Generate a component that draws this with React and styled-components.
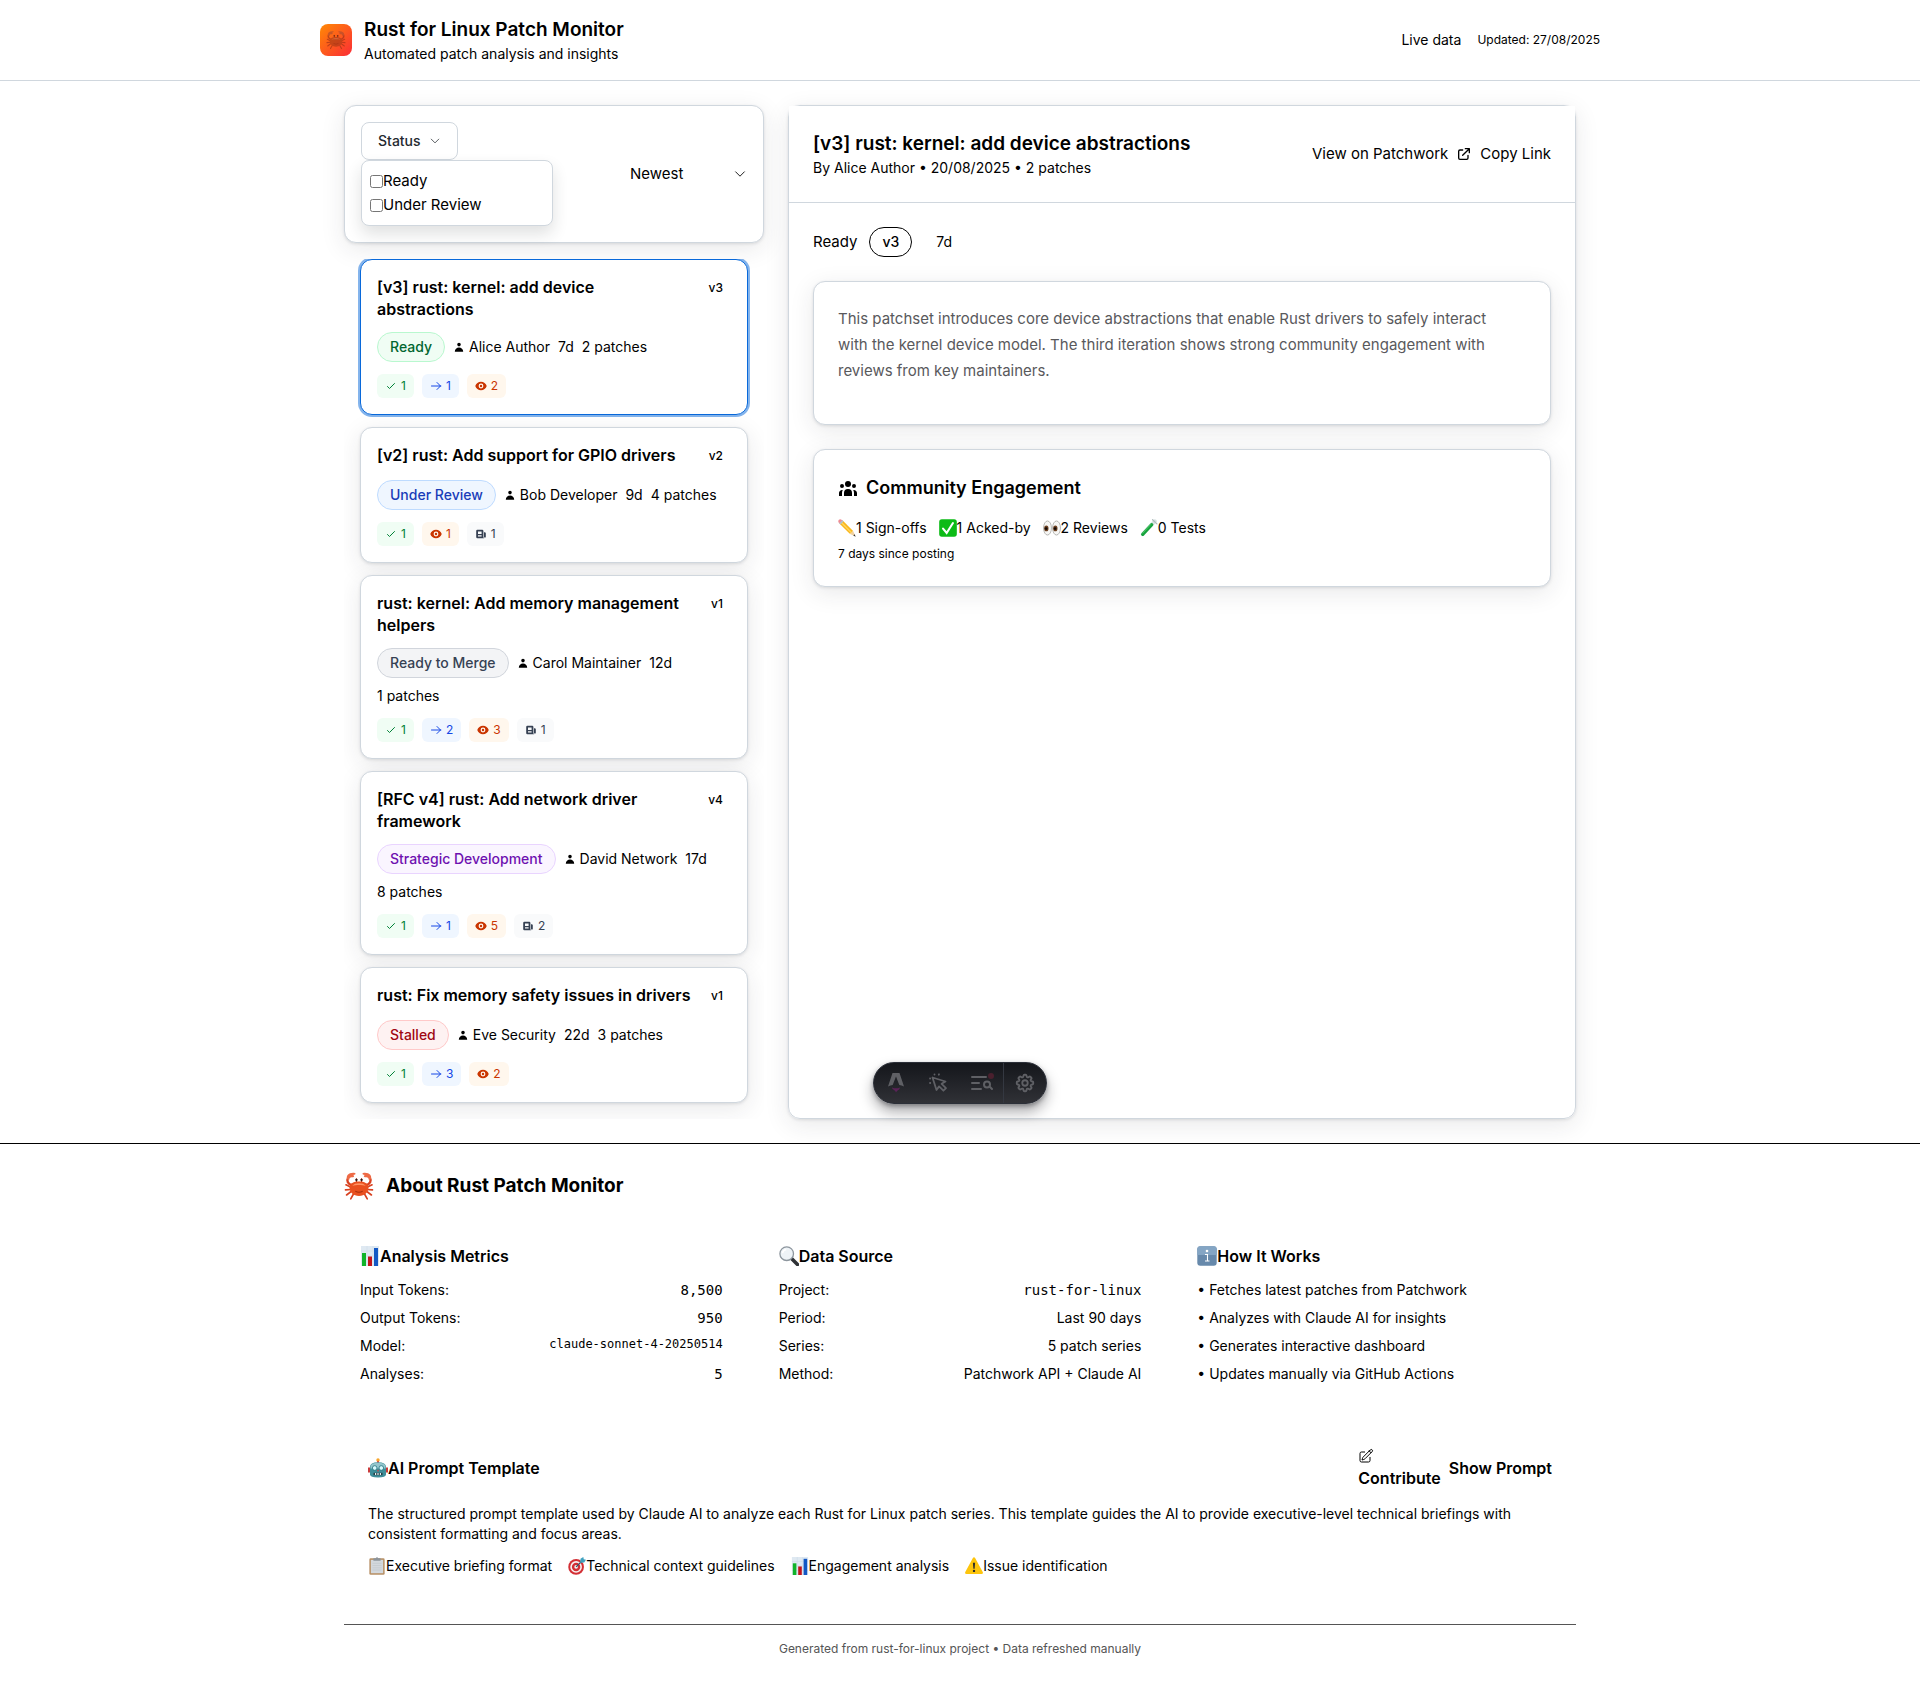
import React from "react";
import styled, { createGlobalStyle, css } from "styled-components";
import { HiUser, HiUserGroup, HiEye, HiNewspaper, HiOutlineCheck, HiOutlineArrowRight, HiOutlineExternalLink } from "react-icons/hi";
import { HiOutlinePencilSquare, HiOutlineChevronDown, HiOutlineCog8Tooth } from "react-icons/hi2";

const line = "#d0d7de";
const mono = '"DejaVu Sans Mono", "Liberation Mono", monospace';
const softShadow = "0 1px 3px rgba(37, 41, 46, 0.12), 0 6px 24px rgba(37, 41, 46, 0.1)";

const GlobalStyle = createGlobalStyle`
  *, *::before, *::after { box-sizing: border-box; }
  body {
    margin: 0;
    background: #fff;
    color: #000;
    font: 400 15px/24px Inter, "Noto Sans", sans-serif;
  }
  h1, h2, h3, p, ul, dl, dd { margin: 0; padding: 0; }
  a { color: inherit; text-decoration: none; }
  button, select, input { font: inherit; color: inherit; }
  svg { flex: none; display: block; }
`;

const small = css`
  font-size: 14px;
  line-height: 20px;
`;
const tiny = css`
  font-size: 12px;
  line-height: 16px;
`;

/* ---------- pictograms ---------- */

const drawings = {
  crab: (
    <>
      <g fill="none" stroke="#d8401f" strokeWidth="1.1" strokeLinecap="round">
        <path d="M5 11 1.3 9.2M4.600 12.300 1 12.600M5 13.500 1.700 16M6.500 15 4.500 18.600 M15 11l3.700-1.800M15.400 12.300l3.600.3M15 13.500l3.300 2.500M13.500 15l2 3.600" />
        <path d="M5.500 9.500C2.500 8.800 1.600 6.500 2.700 4.500M14.500 9.500c3-.7 3.900-3 2.800-5" strokeWidth="1.600" />
      </g>
      <path d="M2.200 5.600C1 3 3.300.7 7.300 1.300 8.200 1.700 7.600 2.600 6 2.700 7.300 3.300 6.700 4.300 5.600 4.200 4.300 4 3.500 4.600 3.500 5.800ZM17.800 5.600C19 3 16.700.7 12.700 1.300c-.9.4-.3 1.300 1.300 1.400-1.300.6-.7 1.600.4 1.500 1.300-.2 2.100.4 2.100 1.600Z" fill="#ee6a45" />
      <path d="M3.700 11C3.700 8.300 6.500 7 10 7s6.300 1.300 6.300 4c0 3-2.600 5.700-6.300 5.700S3.700 14 3.700 11Z" fill="#e9501f" />
      <path d="M5.500 9.800C6.500 8.600 8 8.100 10 8.100s3.500.5 4.500 1.700c-2.500-.6-6.500-.6-9 0Z" fill="#ff9464" />
      <path d="M8.300 4.900v2.500M11.700 4.900v2.500" stroke="#b53316" strokeWidth=".7" />
      <circle cx="8.300" cy="5.900" r=".8" fill="#2b1512" />
      <circle cx="11.700" cy="5.900" r=".8" fill="#2b1512" />
      <path d="M7.500 13.400q2.500 1.600 5 0" fill="none" stroke="#a8300f" strokeWidth=".7" />
    </>
  ),
  chart: (
    <>
      <path d="M1 0h18v20H1z" fill="#dfe9f2" />
      <path d="M1 5h18M1 10h18M1 15h18M7 0v20M13 0v20" stroke="#c9d8e6" strokeWidth=".5" />
      <path d="M2 7h4v13H2z" fill="#10b32a" />
      <path d="M8 10.500h4V20H8z" fill="#c3141b" />
      <path d="M14 2h4v18h-4z" fill="#1358c4" />
    </>
  ),
  lens: (
    <>
      <path d="m12.500 12.500 6 6" stroke="#2f3236" strokeWidth="3.600" strokeLinecap="round" />
      <circle cx="7.700" cy="7.700" r="6.800" fill="#eef3f7" stroke="#8d969e" strokeWidth="1.300" />
      <path d="M3.500 7.200a4.300 4.300 0 0 1 3.700-3.800" fill="none" stroke="#fff" strokeWidth="1.500" />
    </>
  ),
  info: (
    <>
      <rect x=".3" y=".3" width="19.400" height="19.400" rx="3" fill="#6789ab" />
      <path d="M.3 3.300a3 3 0 0 1 3-3h13.400a3 3 0 0 1 3 3V9H.3z" fill="#84a5c4" />
      <circle cx="10" cy="5" r="1.300" fill="#fff" />
      <path d="M8 8.500h2.500V15h1.500M8 15h4.500" fill="none" stroke="#fff" strokeWidth="1.100" />
    </>
  ),
  robot: (
    <>
      <circle cx="10" cy="2" r="1.700" fill="#f7a52a" />
      <path d="M9.200 3h1.600v3H9.200z" fill="#d93a3a" />
      <path d="M0 9.500h3v5H0zM17 9.500h3v5h-3z" fill="#c93b3b" />
      <path d="M2 9Q2 4.300 10 4.300T18 9v7.500q0 3-8 3t-8-3Z" fill="#3e8e99" />
      <path d="M2.500 9q0-4.200 7.500-4.200T17.500 9v1.500h-15Z" fill="#93c5cc" />
      <circle cx="6.700" cy="10" r="2.300" fill="#d8fbff" stroke="#24727e" strokeWidth=".8" />
      <circle cx="13.300" cy="10" r="2.300" fill="#d8fbff" stroke="#24727e" strokeWidth=".8" />
      <path d="m10 11.300 1 2H9z" fill="#d93a3a" />
      <path d="M5.500 14.800h9v2.400h-9z" fill="#263c42" />
      <path d="M7 15h1.200v2H7zM9.400 15h1.200v2H9.400zM11.800 15H13v2h-1.200z" fill="#e8eff0" />
    </>
  ),
  pencil: (
    <>
      <path d="M5.200 1.800 16.800 13.400l-3.400 3.400L1.800 5.200z" fill="#f9b61b" />
      <path d="M4 3 15.600 14.600l-1.100 1.100L2.900 4.100z" fill="#ffd55e" />
      <path d="M.7 3.900Q-.2 2 1 .9T3.900.7L5.200 1.800 1.800 5.200Z" fill="#f08b93" />
      <path d="m4.600 1.200 1.500 1.500-3.400 3.400L1.200 4.600z" fill="#b8bfc6" />
      <path d="m16.800 13.400 2.700 6.100-6.100-2.700z" fill="#f1d1a0" />
      <path d="m18.400 17 1.200 2.600L17 18.400z" fill="#333" />
    </>
  ),
  check: (
    <>
      <rect x=".2" y=".2" width="19.600" height="19.600" rx="3" fill="#0cbb16" />
      <path d="M4.500 10.700 8.500 15.500 15.500 4.500" fill="none" stroke="#fff" strokeWidth="2.300" strokeLinecap="round" />
    </>
  ),
  eyes: (
    <>
      <ellipse cx="5" cy="10" rx="4.400" ry="7.800" fill="#f7f7f5" stroke="#a9a9a6" strokeWidth=".9" />
      <ellipse cx="15" cy="10" rx="4.400" ry="7.800" fill="#f7f7f5" stroke="#a9a9a6" strokeWidth=".9" />
      <ellipse cx="3.700" cy="10.500" rx="2.400" ry="3.200" fill="#6b3f1f" />
      <ellipse cx="13.700" cy="10.500" rx="2.400" ry="3.200" fill="#6b3f1f" />
      <circle cx="3.500" cy="10.600" r="1.500" fill="#140c08" />
      <circle cx="13.500" cy="10.600" r="1.500" fill="#140c08" />
    </>
  ),
  tube: (
    <>
      <path d="M16.500 2.500 3 17" stroke="#d7e2e2" strokeWidth="4.200" strokeLinecap="round" />
      <path d="M13 6.300 3 17" stroke="#16a33c" strokeWidth="3.600" strokeLinecap="round" />
      <path d="M12 6 2.700 16" stroke="#63d67c" strokeWidth=".9" />
      <path d="m14 .8 4.800 4.600" stroke="#aebbbb" strokeWidth="1.400" strokeLinecap="round" />
    </>
  ),
  clipboard: (
    <>
      <rect x="1.500" y="1.500" width="17" height="18.200" rx="1.500" fill="#b89167" />
      <path d="M3.200 3.200h13.600V18H3.200z" fill="#d3d8dd" />
      <path d="M5 7h10M5 9.500h10M5 12h10M5 14.500h10" stroke="#bcc2c8" strokeWidth=".6" />
      <path d="M6 1.500h2.500Q10-1 11.500 1.500H14v2.700H6z" fill="#8c949b" />
    </>
  ),
  target: (
    <>
      <circle cx="9" cy="11" r="8.700" fill="#d32f35" />
      <circle cx="9" cy="11" r="6.500" fill="#f7f1f1" />
      <circle cx="9" cy="11" r="4.700" fill="#d32f35" />
      <circle cx="9" cy="11" r="2" fill="#f7f1f1" />
      <path d="m9 11 7-7" stroke="#33566b" strokeWidth="1.400" />
      <path d="m13.500 6.500.4-4.500L17 0l.5 2.500 2.500.5-2 3z" fill="#3fa1bf" />
    </>
  ),
  warning: (
    <>
      <path d="M8.600 1.300q1.400-1.900 2.800 0l8.300 15.400q.8 2.300-1.400 2.300H1.700Q-.5 19 .3 16.700Z" fill="#fdc50d" />
      <path d="M8.800 6.500h2.400l-.5 6.500H9.300z" fill="#2b2b2b" />
      <circle cx="10" cy="15.500" r="1.300" fill="#2b2b2b" />
    </>
  ),
};

const Emoji = ({ name, size = 20 }) => (
  <svg width={size} height={size} viewBox="0 0 20 20" aria-hidden="true">
    {drawings[name]}
  </svg>
);

/* ---------- header ---------- */

const TopBar = styled.header`
  border-bottom: 1px solid ${line};
`;
const TopBarInner = styled.div`
  max-width: 1280px;
  margin: 0 auto;
  padding: 16px 0;
  display: flex;
  align-items: center;
  justify-content: space-between;
`;
const Brand = styled.div`
  display: flex;
  align-items: center;
  gap: 12px;
`;
const Logo = styled.div`
  width: 32px;
  height: 32px;
  border-radius: 8px;
  background: linear-gradient(135deg, #ff8904, #fb2c36);
  display: grid;
  place-items: center;
  svg {
    opacity: 0.6;
    filter: brightness(0.7);
  }
`;
const Heading = styled.h1`
  font-size: 19px;
  line-height: 28px;
  font-weight: 600;
`;
const Sub = styled.p`
  ${small}
`;
const Tiny = styled.p`
  ${tiny}
`;
const Freshness = styled.div`
  display: flex;
  align-items: center;
  gap: 16px;
`;

/* ---------- layout ---------- */

const Main = styled.main`
  position: relative;
  max-width: 1280px;
  margin: 0 auto;
  padding: 24px;
  display: grid;
  grid-template-columns: 420px minmax(0, 1fr);
  gap: 24px;
`;
const Sidebar = styled.div`
  display: flex;
  flex-direction: column;
  gap: 16px;
`;
const Card = styled.section`
  border: 1px solid ${line};
  border-radius: 12px;
  background: #fff;
  box-shadow: ${softShadow};
  padding: ${(p) => p.$pad || 16}px;
`;

/* ---------- filters ---------- */

const FilterCard = styled(Card)`
  display: flex;
  align-items: center;
  justify-content: space-between;
`;
const StatusButton = styled.button`
  ${small}
  display: flex;
  align-items: center;
  gap: 8px;
  padding: 8px 16px;
  border: 1px solid ${line};
  border-radius: 8px;
  background: #fff;
  color: #24292f;
  font-weight: 500;
`;
const StatusMenu = styled.div`
  width: 192px;
  padding: 8px;
  border: 1px solid ${line};
  border-radius: 8px;
  background: #fff;
  box-shadow: 0 8px 16px rgba(37, 41, 46, 0.14);
`;
const Option = styled.label`
  display: flex;
  align-items: center;
  input {
    width: 13px;
    height: 13px;
    margin: 0;
  }
`;
const SortBox = styled.div`
  position: relative;
  width: 117px;
  svg {
    position: absolute;
    right: 0;
    top: 5px;
    pointer-events: none;
  }
`;
const SortSelect = styled.select`
  appearance: none;
  display: block;
  width: 100%;
  border: 0;
  padding: 0;
  background: transparent;
`;

/* ---------- patch list ---------- */

const List = styled.div`
  display: flex;
  flex-direction: column;
  gap: 12px;
  padding: 0 16px 16px;
  overflow: hidden;
`;
const Patch = styled.article`
  display: flex;
  flex-direction: column;
  gap: 12px;
  padding: 16px;
  border: 1px solid ${(p) => (p.$active ? "#0969da" : line)};
  border-radius: 12px;
  background: #fff;
  box-shadow: ${(p) => (p.$active ? "0 0 0 2px rgba(9, 105, 218, 0.5)" : softShadow)};
`;
const PatchTop = styled.div`
  display: flex;
  align-items: flex-start;
  justify-content: space-between;
  gap: 12px;
`;
const PatchTitle = styled.h2`
  font-size: 16px;
  line-height: 22px;
  font-weight: 600;
`;
const Version = styled.span`
  ${tiny}
  padding: 4px 8px;
  font-weight: 500;
`;
const Meta = styled.div`
  ${small}
  display: flex;
  flex-wrap: wrap;
  align-items: center;
  gap: 8px;
`;
const Author = styled.span`
  display: flex;
  align-items: center;
  gap: 4px;
`;
const badgeTones = {
  green: ["#f0fdf4", "#016630", "#b9f8cf"],
  blue: ["#eff6ff", "#193cb8", "#bedbff"],
  gray: ["#f3f4f6", "#364153", "#d1d5dc"],
  purple: ["#faf5ff", "#6e11b0", "#e9d4ff"],
  red: ["#fef2f2", "#9f0712", "#ffc9c9"],
  plain: ["#fff", "#000", "#000"],
};
const Badge = styled.span`
  ${small}
  padding: 4px 12px;
  border: 1px solid ${(p) => badgeTones[p.$tone][2]};
  border-radius: 15px;
  background: ${(p) => badgeTones[p.$tone][0]};
  color: ${(p) => badgeTones[p.$tone][1]};
  font-weight: 500;
`;
const Age = styled.span`
  ${small}
  padding: 0 12px;
`;
const Row = styled.div`
  display: flex;
  align-items: center;
  gap: ${(p) => p.$gap}px;
`;
const chipTones = {
  acks: ["#f0fdf4", "#008236"],
  signs: ["#eff6ff", "#1447e6"],
  reviews: ["#fff7ed", "#ca3500"],
  replies: ["#f9fafb", "#364153"],
};
const ChipBox = styled.span`
  ${tiny}
  display: flex;
  align-items: center;
  gap: 4px;
  padding: 4px 8px;
  border-radius: 6px;
  background: ${(p) => chipTones[p.$kind][0]};
  color: ${(p) => chipTones[p.$kind][1]};
`;
const chipIcons = {
  acks: HiOutlineCheck,
  signs: HiOutlineArrowRight,
  reviews: HiEye,
  replies: HiNewspaper,
};
const Chip = ({ kind, count }) => {
  const Icon = chipIcons[kind];
  return (
    <ChipBox $kind={kind}>
      <Icon size={12} />
      {count}
    </ChipBox>
  );
};

const patches = [
  { title: "[v3] rust: kernel: add device abstractions", v: "v3", status: "Ready", tone: "green", author: "Alice Author", age: "7d", count: 2, chips: { acks: 1, signs: 1, reviews: 2 }, active: true },
  { title: "[v2] rust: Add support for GPIO drivers", v: "v2", status: "Under Review", tone: "blue", author: "Bob Developer", age: "9d", count: 4, chips: { acks: 1, reviews: 1, replies: 1 } },
  { title: "rust: kernel: Add memory management helpers", v: "v1", status: "Ready to Merge", tone: "gray", author: "Carol Maintainer", age: "12d", count: 1, chips: { acks: 1, signs: 2, reviews: 3, replies: 1 } },
  { title: "[RFC v4] rust: Add network driver framework", v: "v4", status: "Strategic Development", tone: "purple", author: "David Network", age: "17d", count: 8, chips: { acks: 1, signs: 1, reviews: 5, replies: 2 } },
  { title: "rust: Fix memory safety issues in drivers", v: "v1", status: "Stalled", tone: "red", author: "Eve Security", age: "22d", count: 3, chips: { acks: 1, signs: 3, reviews: 2 } },
];

/* ---------- detail ---------- */

const Panel = styled.section`
  border: 1px solid ${line};
  border-radius: 12px;
  box-shadow: ${softShadow};
`;
const PanelHead = styled.div`
  display: flex;
  align-items: center;
  justify-content: space-between;
  padding: 24px;
  background: #fff;
  border-bottom: 1px solid ${line};
`;
const PanelBody = styled.div`
  display: flex;
  flex-direction: column;
  gap: 24px;
  padding: 24px;
`;
const PlainLink = styled.a`
  display: flex;
  align-items: center;
  gap: 8px;
`;
const PlainButton = styled.button`
  border: 0;
  padding: 0;
  background: none;
  font-size: ${(p) => (p.$strong ? 16 : 15)}px;
  font-weight: ${(p) => (p.$strong ? 600 : 400)};
`;
const Summary = styled.p`
  max-width: 680px;
  margin-bottom: 16px;
  line-height: 26px;
  color: #59595c;
`;
const CardTitle = styled.h2`
  display: flex;
  align-items: center;
  gap: 8px;
  margin-bottom: 16px;
  font-size: 18px;
  line-height: 28px;
  font-weight: 600;
`;
const Stats = styled.ul`
  ${small}
  display: flex;
  flex-wrap: wrap;
  gap: ${(p) => p.$gap}px;
  margin-bottom: ${(p) => p.$below || 0}px;
  list-style: none;
  li {
    display: flex;
    align-items: center;
  }
`;

/* ---------- floating toolbar ---------- */

const Toolbar = styled.div`
  position: absolute;
  left: 50%;
  bottom: 39px;
  transform: translateX(-50%);
  display: flex;
  height: 42px;
  border: 1px solid #2b2f38;
  border-radius: 21px;
  background: linear-gradient(#14161b, #303136);
  box-shadow: 0 8px 14px rgba(19, 21, 26, 0.35), 0 2px 4px rgba(19, 21, 26, 0.35);
  color: #5f6065;
`;
const Tool = styled.button`
  width: 43px;
  padding: 0;
  border: 0;
  border-left: ${(p) => (p.$divided ? "1px solid #343841" : "0")};
  background: none;
  display: grid;
  place-items: center;
`;

/* ---------- footer ---------- */

const Footer = styled.footer`
  border-top: 1px solid #000;
`;
const FooterInner = styled.div`
  max-width: 1280px;
  margin: 0 auto;
  padding: 24px;
`;
const AboutTitle = styled.h2`
  display: flex;
  align-items: center;
  gap: 12px;
  height: 36px;
  margin-bottom: 24px;
  font-size: 19px;
  line-height: 28px;
  font-weight: 700;
`;
const Columns = styled.div`
  display: grid;
  grid-template-columns: repeat(3, minmax(0, 1fr));
  gap: 24px;
  margin-bottom: 24px;
`;
const Column = styled.section`
  padding: 16px;
`;
const SubTitle = styled.h3`
  display: flex;
  align-items: center;
  font-size: 16px;
  line-height: 24px;
  font-weight: 600;
`;
const Facts = styled.dl`
  ${small}
  display: flex;
  flex-direction: column;
  gap: 8px;
  margin-top: 12px;
  div {
    display: flex;
    justify-content: space-between;
  }
`;
const Value = styled.dd`
  font-family: ${(p) => (p.$mono ? mono : "inherit")};
  ${(p) => p.$tiny && tiny}
`;
const Steps = styled.ul`
  ${small}
  display: flex;
  flex-direction: column;
  gap: 8px;
  margin-top: 12px;
  list-style: none;
`;
const Prompt = styled.section`
  padding: 24px;
`;
const PromptHead = styled.div`
  display: flex;
  align-items: center;
  justify-content: space-between;
  margin-bottom: 16px;
  line-height: 20px;
`;
const Contribute = styled.a`
  display: flex;
  flex-direction: column;
  gap: 4px;
  font-size: 16px;
  font-weight: 600;
`;
const PromptText = styled.p`
  ${small}
  margin-bottom: 12px;
`;
const Closing = styled.p`
  ${tiny}
  margin-top: 24px;
  padding-top: 16px;
  border-top: 1px solid #555;
  color: #555;
  text-align: center;
`;

const columns = [
  { icon: "chart", title: "Analysis Metrics", facts: [["Input Tokens:", "8,500", true], ["Output Tokens:", "950", true], ["Model:", "claude-sonnet-4-20250514", true, true], ["Analyses:", "5", true]] },
  { icon: "lens", title: "Data Source", facts: [["Project:", "rust-for-linux", true], ["Period:", "Last 90 days"], ["Series:", "5 patch series"], ["Method:", "Patchwork API + Claude AI"]] },
];
const steps = ["Fetches latest patches from Patchwork", "Analyzes with Claude AI for insights", "Generates interactive dashboard", "Updates manually via GitHub Actions"];

export default function App() {
  return (
    <>
      <GlobalStyle />
      <TopBar>
        <TopBarInner>
          <Brand>
            <Logo>
              <Emoji name="crab" />
            </Logo>
            <div>
              <Heading>Rust for Linux Patch Monitor</Heading>
              <Sub>Automated patch analysis and insights</Sub>
            </div>
          </Brand>
          <Freshness>
            <Sub>Live data</Sub>
            <Tiny>Updated: 27/08/2025</Tiny>
          </Freshness>
        </TopBarInner>
      </TopBar>

      <Main>
        <Sidebar>
          <FilterCard>
            <div>
              <StatusButton type="button">
                Status
                <HiOutlineChevronDown size={12} />
              </StatusButton>
              <StatusMenu>
                <Option>
                  <input type="checkbox" />
                  Ready
                </Option>
                <Option>
                  <input type="checkbox" />
                  Under Review
                </Option>
              </StatusMenu>
            </div>
            <SortBox>
              <SortSelect aria-label="Sort patches" defaultValue="newest">
                <option value="newest">Newest</option>
              </SortSelect>
              <HiOutlineChevronDown size={14} />
            </SortBox>
          </FilterCard>

          <List>
            {patches.map((p) => (
              <Patch key={p.title} $active={p.active}>
                <PatchTop>
                  <PatchTitle>{p.title}</PatchTitle>
                  <Version>{p.v}</Version>
                </PatchTop>
                <Meta>
                  <Badge $tone={p.tone}>{p.status}</Badge>
                  <Author>
                    <HiUser size={12} />
                    {p.author}
                  </Author>
                  <span>{p.age}</span>
                  <span>{p.count} patches</span>
                </Meta>
                <Row $gap={8}>
                  {Object.entries(p.chips).map(([kind, count]) => (
                    <Chip key={kind} kind={kind} count={count} />
                  ))}
                </Row>
              </Patch>
            ))}
          </List>
        </Sidebar>

        <Panel>
          <PanelHead>
            <div>
              <Heading as="h2">[v3] rust: kernel: add device abstractions</Heading>
              <Sub>By Alice Author • 20/08/2025 • 2 patches</Sub>
            </div>
            <Row $gap={8}>
              <PlainLink href="#patchwork">
                View on Patchwork
                <HiOutlineExternalLink size={16} />
              </PlainLink>
              <PlainButton type="button">Copy Link</PlainButton>
            </Row>
          </PanelHead>
          <PanelBody>
            <Row $gap={12}>
              <span>Ready</span>
              <Badge $tone="plain">v3</Badge>
              <Age>7d</Age>
            </Row>
            <Card $pad={24}>
              <Summary>
                This patchset introduces core device abstractions that enable Rust drivers to safely interact with the
                kernel device model. The third iteration shows strong community engagement with reviews from key
                maintainers.
              </Summary>
            </Card>
            <Card $pad={24}>
              <CardTitle>
                <HiUserGroup size={20} />
                Community Engagement
              </CardTitle>
              <Stats $gap={12} $below={8}>
                <li><Emoji name="pencil" size={18} />1 Sign-offs</li>
                <li><Emoji name="check" size={18} />1 Acked-by</li>
                <li><Emoji name="eyes" size={18} />2 Reviews</li>
                <li><Emoji name="tube" size={18} />0 Tests</li>
              </Stats>
              <Tiny>7 days since posting</Tiny>
            </Card>
          </PanelBody>
        </Panel>

        <Toolbar role="toolbar" aria-label="Developer tools">
          <Tool type="button" aria-label="Menu">
            <svg width="20" height="22" viewBox="0 0 20 22">
              <path d="M6.500 1h7L18 14.500q-2.500-1.300-4.700-1.500L10 4.500 6.700 13Q4.500 13.200 2 14.500Z" fill="currentColor" />
              <path d="M6 15.500q4 1.700 8 0-.2 2-2 2.800-1 .6-2 2.200-.5-1.800-2-2.500-2-.8-2-2.500Z" fill="#5b2358" />
            </svg>
          </Tool>
          <Tool type="button" aria-label="Inspect">
            <svg width="20" height="20" viewBox="1 0 20 20" fill="none" stroke="currentColor" strokeWidth="1.800" strokeLinejoin="round" strokeLinecap="round">
              <path d="m4.500 4.500 4 12.500 2.600-3.600 4.300 4.300 2.600-2.600-4.400-4.300L17.500 8.500ZM2 5.500h.2M2 10h.3M6.500 1.300v.2M11 1.300l-.2.400" />
            </svg>
          </Tool>
          <Tool type="button" aria-label="Audit">
            <svg width="24" height="20" viewBox="0 0 24 20" fill="none" stroke="currentColor" strokeWidth="2" strokeLinecap="round">
              <path d="M2 4h14M2 10h7M2 16h9M20 14l2 2" />
              <circle cx="17" cy="11.500" r="3" />
              <circle cx="21" cy="3" r="3" fill="#4a202e" stroke="none" />
            </svg>
          </Tool>
          <Tool type="button" aria-label="Settings" $divided>
            <HiOutlineCog8Tooth size={22} strokeWidth={2} />
          </Tool>
        </Toolbar>
      </Main>

      <Footer>
        <FooterInner>
          <AboutTitle>
            <Emoji name="crab" size={30} />
            About Rust Patch Monitor
          </AboutTitle>
          <Columns>
            {columns.map((c) => (
              <Column key={c.title}>
                <SubTitle>
                  <Emoji name={c.icon} />
                  {c.title}
                </SubTitle>
                <Facts>
                  {c.facts.map(([label, value, isMono, isTiny]) => (
                    <div key={label}>
                      <dt>{label}</dt>
                      <Value $mono={isMono} $tiny={isTiny}>{value}</Value>
                    </div>
                  ))}
                </Facts>
              </Column>
            ))}
            <Column>
              <SubTitle>
                <Emoji name="info" />
                How It Works
              </SubTitle>
              <Steps>
                {steps.map((s) => (
                  <li key={s}>• {s}</li>
                ))}
              </Steps>
            </Column>
          </Columns>

          <Prompt>
            <PromptHead>
              <SubTitle>
                <Emoji name="robot" />
                AI Prompt Template
              </SubTitle>
              <Row $gap={8}>
                <Contribute href="#contribute">
                  <HiOutlinePencilSquare size={16} />
                  Contribute
                </Contribute>
                <PlainButton type="button" $strong>Show Prompt</PlainButton>
              </Row>
            </PromptHead>
            <PromptText>
              The structured prompt template used by Claude AI to analyze each Rust for Linux patch series. This
              template guides the AI to provide executive-level technical briefings with consistent formatting and
              focus areas.
            </PromptText>
            <Stats $gap={16}>
              <li><Emoji name="clipboard" size={18} />Executive briefing format</li>
              <li><Emoji name="target" size={18} />Technical context guidelines</li>
              <li><Emoji name="chart" size={18} />Engagement analysis</li>
              <li><Emoji name="warning" size={18} />Issue identification</li>
            </Stats>
          </Prompt>
          <Closing>Generated from rust-for-linux project • Data refreshed manually</Closing>
        </FooterInner>
      </Footer>
    </>
  );
}
